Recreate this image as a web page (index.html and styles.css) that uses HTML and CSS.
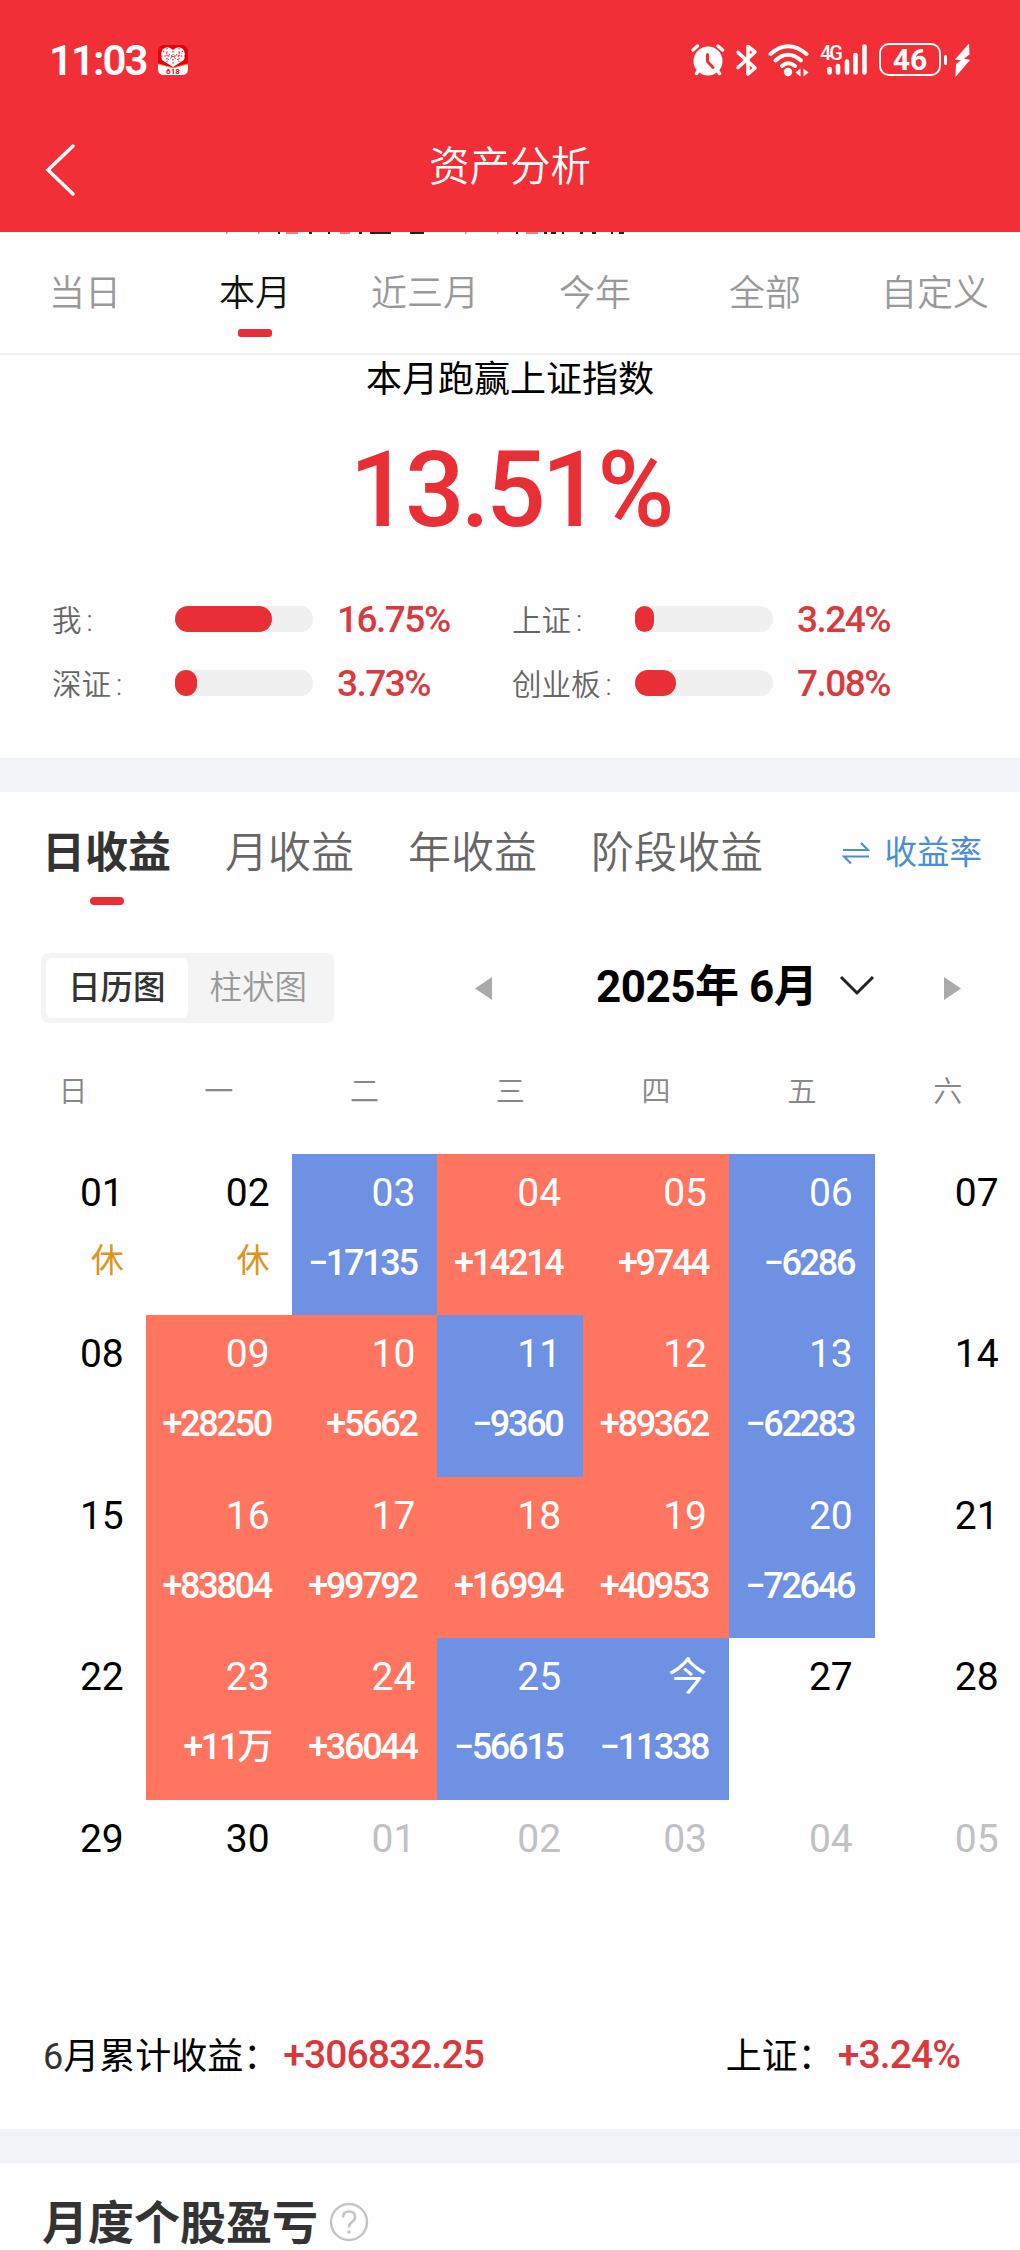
FILE: index.html
```html
<!DOCTYPE html>
<html lang="zh-CN">
<head>
    <meta charset="UTF-8">
    <title>资产分析</title>
    <link rel="stylesheet" href="styles.css">
</head>
<body>
    <!-- 顶部 -->
    <div class="header">
        <div class="status">
            <span class="time">11:03</span>
            <svg class="app" width="30" height="30" viewBox="0 0 30 30">
                <rect width="30" height="30" rx="6" fill="#e8000f"/>
                <path d="M0 19 L15 23 L30 19 V24 Q30 30 24 30 H6 Q0 30 0 24 Z" fill="#fff"/>
                <path d="M0 19 L15 23 L30 19" fill="none" stroke="#f5a04a" stroke-width="1"/>
                <path d="M15 22 L4 15 Q2 8 5 4 Q10 0 15 5 Q20 0 25 4 Q28 8 26 15 Z" fill="#fff"/>
                <path d="M5 6 L22 16 M25 6 L8 16 M9 3 V17 M21 3 V17 M3 11 H27 M15 6 V10 M15 14 V20" stroke="#e8000f" stroke-width="1" stroke-dasharray="1.5 1.8"/>
                <text x="15" y="29" text-anchor="middle" class="app_text">618</text>
            </svg>
            <svg class="icons" width="282" height="36" viewBox="0 0 282 36">
                <!-- 闹钟 -->
                <g stroke="#fff" stroke-width="3.4" stroke-linecap="round" fill="none">
                    <path d="M2 8 L6.500 4 M27 4 L31.500 8 M7.500 28.500 L5.500 31.500 M26.500 28.500 L28.500 31.500"/>
                    <circle cx="17" cy="19" r="14.500" fill="#fff" stroke="none"/>
                    <path d="M16.500 12.500 V19.500 L22 25.500" stroke="#f22f37" stroke-width="3"/>
                </g>
                <!-- 蓝牙 -->
                <path d="M47 10.500 L64 26 L57 32 V4.500 L64 10 L47 25.500" fill="none" stroke="#fff" stroke-width="3.600" stroke-linecap="round" stroke-linejoin="round"/>
                <!-- wifi -->
                <g stroke="#fff" stroke-width="4" stroke-linecap="round" fill="none">
                    <path d="M79.500 12 Q97 -3.500 115.500 12"/>
                    <path d="M84.500 18.500 Q97 7 110 18.500"/>
                    <path d="M91 24 Q97 18.500 104 24"/>
                </g>
                <circle cx="97" cy="30" r="4.200" fill="#fff"/>
                <path d="M104.500 30.500 l5 -4 v8 z M117.500 30.500 l-5 -4 v8 z" fill="#fff"/>
                <!-- 信号 -->
                <text x="129" y="18" class="net">4G</text>
                <g stroke="#fff" stroke-width="4.600" stroke-linecap="round">
                    <path d="M138.500 27 V30.500 M147 24 V30.500 M156 19.500 V30.500 M164.500 13 V30.500 M173.500 4.500 V30.500"/>
                </g>
                <!-- 电量 -->
                <rect x="189" y="2" width="60" height="31" rx="9" fill="none" stroke="#fff" stroke-width="2"/>
                <text x="219" y="28" text-anchor="middle" class="power">46</text>
                <path d="M254.500 14.500 V21.500" stroke="#fff" stroke-width="3" stroke-linecap="round"/>
                <path d="M278 1.500 L264 17.500 L270 18.500 L265 22 L264.500 35 L279 18 L273 16.500 L278.500 12.500 Z" fill="#fff"/>
            </svg>
        </div>
        <div class="nav">
            <svg class="back" width="34" height="56" viewBox="0 0 34 56">
                <path d="M29 4 L4 28 L29 52" fill="none" stroke="#fff" stroke-width="3.500" stroke-linecap="round"/>
            </svg>
            <h1>资产分析</h1>
        </div>
        <svg class="rest" width="430" height="2" viewBox="0 0 430 2">
            <path d="M16 1H17.500 M48 1H49.500 M76 1H88 M130 1H140 M255 1H256.500 M287 1H288.500 M316 1H328" stroke="#e25a5e" stroke-width="1.500"/>
            <path d="M68 1H70 M99 1H102 M118 1H120 M149 1H152 M160 1H181 M200 1H214 M306 1H308 M334 1H337 M341 1H346 M352 1H354 M370 1H373 M382 1H386 M401 1H403 M409 1H414" stroke="#222" stroke-width="2"/>
        </svg>
    </div>
    <!-- 时间段 -->
    <div class="range">
        <span>当日</span>
        <span class="on">本月</span>
        <span>近三月</span>
        <span>今年</span>
        <span>全部</span>
        <span>自定义</span>
    </div>
    <!-- 跑赢指数 -->
    <div class="beat">
        <p class="beat_title">本月跑赢上证指数</p>
        <p class="beat_num">13.51%</p>
        <div class="compare">
            <div class="item"><span class="name">我<i>:</i></span><span class="bar"><i style="width: 97px;"></i></span><b>16.75%</b></div>
            <div class="item"><span class="name">上证<i>:</i></span><span class="bar"><i style="width: 19px;"></i></span><b>3.24%</b></div>
            <div class="item"><span class="name">深证<i>:</i></span><span class="bar"><i style="width: 22px;"></i></span><b>3.73%</b></div>
            <div class="item"><span class="name">创业板<i>:</i></span><span class="bar"><i style="width: 41px;"></i></span><b>7.08%</b></div>
        </div>
    </div>
    <!-- 收益日历 -->
    <div class="profit">
        <div class="tabs">
            <span class="on">日收益</span>
            <span>月收益</span>
            <span>年收益</span>
            <span>阶段收益</span>
            <a href="javascript:;" class="rate">
                <svg width="28" height="24" viewBox="0 0 28 24">
                    <path d="M1 9 H26 L19 2 M27 15.500 H2 L9 22.500" fill="none" stroke="#4a8fd6" stroke-width="2.200"/>
                </svg>收益率</a>
        </div>
        <div class="tool">
            <div class="toggle">
                <span class="on">日历图</span>
                <span>柱状图</span>
            </div>
            <svg class="prev" width="17" height="23" viewBox="0 0 17 23"><path d="M17 0 V23 L0 11.500 Z" fill="#aaa"/></svg>
            <span class="month">2025年 6月</span>
            <svg class="down" width="36" height="22" viewBox="0 0 36 22"><path d="M2 2 L18 18 L34 2" fill="none" stroke="#222" stroke-width="3"/></svg>
            <svg class="next" width="17" height="23" viewBox="0 0 17 23"><path d="M0 0 V23 L17 11.500 Z" fill="#aaa"/></svg>
        </div>
        <div class="week">
            <span>日</span><span>一</span><span>二</span><span>三</span><span>四</span><span>五</span><span>六</span>
        </div>
        <div class="days">
            <div class="day rest_day"><em>01</em><b>休</b></div>
            <div class="day rest_day"><em>02</em><b>休</b></div>
            <div class="day down_day"><em>03</em><b>−17135</b></div>
            <div class="day up_day"><em>04</em><b>+14214</b></div>
            <div class="day up_day"><em>05</em><b>+9744</b></div>
            <div class="day down_day"><em>06</em><b>−6286</b></div>
            <div class="day"><em>07</em></div>

            <div class="day"><em>08</em></div>
            <div class="day up_day"><em>09</em><b>+28250</b></div>
            <div class="day up_day"><em>10</em><b>+5662</b></div>
            <div class="day down_day"><em>11</em><b>−9360</b></div>
            <div class="day up_day"><em>12</em><b>+89362</b></div>
            <div class="day down_day"><em>13</em><b>−62283</b></div>
            <div class="day"><em>14</em></div>

            <div class="day"><em>15</em></div>
            <div class="day up_day"><em>16</em><b>+83804</b></div>
            <div class="day up_day"><em>17</em><b>+99792</b></div>
            <div class="day up_day"><em>18</em><b>+16994</b></div>
            <div class="day up_day"><em>19</em><b>+40953</b></div>
            <div class="day down_day"><em>20</em><b>−72646</b></div>
            <div class="day"><em>21</em></div>

            <div class="day"><em>22</em></div>
            <div class="day up_day"><em>23</em><b>+11万</b></div>
            <div class="day up_day"><em>24</em><b>+36044</b></div>
            <div class="day down_day"><em>25</em><b>−56615</b></div>
            <div class="day down_day"><em>今</em><b>−11338</b></div>
            <div class="day"><em>27</em></div>
            <div class="day"><em>28</em></div>

            <div class="day"><em>29</em></div>
            <div class="day"><em>30</em></div>
            <div class="day other"><em>01</em></div>
            <div class="day other"><em>02</em></div>
            <div class="day other"><em>03</em></div>
            <div class="day other"><em>04</em></div>
            <div class="day other"><em>05</em></div>
        </div>
        <div class="total">
            <span><i>6</i>月累计收益：</span><b>+306832.25</b>
            <span class="sh">上证：</span><b>+3.24%</b>
        </div>
    </div>
    <!-- 个股盈亏 -->
    <div class="stock">
        <h2>月度个股盈亏</h2>
        <svg width="40" height="40" viewBox="0 0 40 40">
            <circle cx="20" cy="20" r="18" fill="none" stroke="#c4c4c4" stroke-width="2.400"/>
            <path d="M14 15.500 Q14 9.500 20 9.500 Q26 9.500 26 15 Q26 18 23 20 Q20 22 20 25.500" fill="none" stroke="#c4c4c4" stroke-width="2.600"/>
            <circle cx="20" cy="30" r="1.800" fill="#c4c4c4"/>
        </svg>
    </div>
</body>
</html>
```
FILE: styles.css
```css
* {
    margin: 0;
    padding: 0;
    box-sizing: border-box;
}
body {
    width: 1020px;
    height: 2250px;
    overflow: hidden;
    background-color: #fefefe;
    color: #000;
    font-family: Roboto, "Noto Sans CJK SC", sans-serif;
}
a {
    text-decoration: none;
}
i, em {
    font-style: normal;
}
b {
    font-weight: 500;
}
/* 顶部红色区域 */
.header {
    position: relative;
    height: 232px;
    background-color: #f22f37;
    color: #fff;
}
.status {
    display: flex;
    align-items: center;
    height: 120px;
    padding: 0 47px 0 49px;
}
.time {
    width: 109px;
    font-size: 42px;
    font-weight: 600;
    letter-spacing: -2px;
}
.app_text {
    font-size: 8px;
    font-weight: 700;
    fill: #c8102e;
}
.icons {
    margin-left: auto;
}
.net {
    font-size: 20px;
    font-weight: 500;
    letter-spacing: -2px;
    fill: #fff;
}
.power {
    font-size: 30px;
    font-weight: 700;
    fill: #fff;
}
.nav {
    display: flex;
    align-items: center;
    height: 94px;
    padding-left: 44px;
}
.back {
    margin-top: 6px;
}
.nav h1 {
    width: 864px;
    margin-top: -7px;
    font-size: 40.500px;
    font-weight: 350;
    text-align: center;
}
/* 被顶部盖住的一行字，只露出一点 */
.rest {
    position: absolute;
    left: 210px;
    top: 232px;
}
/* 时间段 */
.range {
    display: flex;
    height: 123px;
    border-bottom: 2px solid #f1f1f1;
    font-size: 36px;
    font-weight: 350;
    color: #999;
}
.range span {
    flex: 1;
    display: flex;
    flex-direction: column;
    align-items: center;
    line-height: 52px;
    padding-top: 36px;
}
.range .on {
    color: #111;
}
.range .on::after {
    content: "";
    width: 34px;
    height: 8px;
    margin-top: 9px;
    border-radius: 3px;
    background-color: #e63036;
}
/* 跑赢指数 */
.beat {
    height: 403px;
    text-align: center;
}
.beat_title {
    padding-top: 1px;
    font-size: 36px;
    line-height: 48px;
}
.beat_num {
    margin-top: 24px;
    font-size: 105px;
    font-weight: 500;
    line-height: 126px;
    letter-spacing: -4px;
    color: #e82f35;
}
.compare {
    display: grid;
    grid-template-columns: 460px 460px;
    grid-auto-rows: 64px;
    margin-top: 33px;
    padding-left: 52px;
}
.item {
    display: flex;
    align-items: center;
    font-size: 29.500px;
    font-weight: 350;
    color: #666;
}
.name {
    width: 123px;
    margin-top: -3px;
    text-align: left;
    white-space: nowrap;
}
.name i {
    margin-left: 5px;
}
.bar {
    width: 138px;
    height: 26px;
    border-radius: 13px;
    background-color: #f0f0f0;
}
.bar i {
    display: block;
    height: 26px;
    border-radius: 13px;
    background-color: #e82f35;
}
.item b {
    margin-left: 24px;
    font-size: 37px;
    letter-spacing: -1.500px;
    color: #d83a40;
}
/* 收益日历 */
.profit {
    height: 1405px;
    border-top: 34px solid #f2f3f8;
    border-bottom: 34px solid #f2f3f8;
}
.tabs {
    display: flex;
    height: 118px;
    padding: 30px 38px 0 42px;
    font-size: 43px;
    font-weight: 350;
    line-height: 62px;
    color: #666;
}
.tabs span {
    margin-right: 54px;
}
.tabs .on {
    display: flex;
    flex-direction: column;
    align-items: center;
    font-weight: 700;
    color: #333;
}
.tabs .on::after {
    content: "";
    width: 34px;
    height: 8px;
    margin-top: 13px;
    border-radius: 4px;
    background-color: #e63036;
}
.tabs .rate {
    display: flex;
    align-items: center;
    height: 62px;
    margin-left: auto;
    font-size: 32.500px;
    font-weight: 400;
    color: #4a8fd6;
}
.rate svg {
    margin-right: 14px;
}
.tool {
    display: flex;
    align-items: center;
    height: 156px;
    padding-left: 41px;
}
.toggle {
    display: flex;
    width: 293px;
    height: 70px;
    padding: 5px;
    border-radius: 8px;
    background-color: #f4f4f4;
    font-size: 32.500px;
    font-weight: 350;
    line-height: 60px;
    color: #999;
}
.toggle span {
    width: 142px;
    text-align: center;
}
.toggle .on {
    border-radius: 6px;
    background-color: #fff;
    font-weight: 500;
    color: #333;
}
.prev {
    margin-left: 141px;
}
.month {
    width: 243px;
    margin: -10px 0 0 104px;
    font-size: 44px;
    font-weight: 700;
    letter-spacing: -0.500px;
    white-space: nowrap;
}
.down {
    margin-top: -4px;
}
.next {
    margin-left: 69px;
}
.week {
    display: grid;
    grid-template-columns: repeat(7, 145.800px);
    height: 88px;
    padding-top: 1px;
    font-size: 29px;
    font-weight: 350;
    line-height: 50px;
    text-align: center;
    color: #888;
}
.days {
    display: grid;
    grid-template-columns: repeat(7, 145.800px);
    grid-auto-rows: 161.400px;
}
.day {
    display: flex;
    flex-direction: column;
    align-items: flex-end;
    padding: 16px 22px 0 0;
}
.day em {
    font-size: 39px;
    line-height: 46px;
}
.day b {
    margin-top: 24px;
    font-size: 36px;
    line-height: 46px;
    letter-spacing: -2.300px;
    margin-right: -1.300px;
}
.rest_day b {
    font-size: 33px;
    font-weight: 400;
    letter-spacing: 0;
    margin: 22px 0 0;
    color: #dd9420;
}
.up_day {
    background-color: #ff755f;
    color: #fff;
}
.down_day {
    background-color: #6e91e4;
    color: #fff;
}
.other {
    color: #c0c0c5;
}
.total {
    display: flex;
    align-items: center;
    height: 168px;
    padding: 16px 60px 0 43px;
    font-size: 36px;
}
.total i {
    color: #333;
}
.total b {
    margin: 4px 0 0 4px;
    font-size: 39px;
    letter-spacing: -0.900px;
    color: #d8383e;
}
.total .sh {
    margin-left: auto;
}
/* 个股盈亏 */
.stock {
    display: flex;
    align-items: center;
    height: 87px;
    padding: 30px 0 0 42px;
}
.stock h2 {
    margin-top: 3px;
    font-size: 46px;
    font-weight: 700;
    line-height: 58px;
    color: #333;
}
.stock svg {
    margin-left: 11px;
}
```
